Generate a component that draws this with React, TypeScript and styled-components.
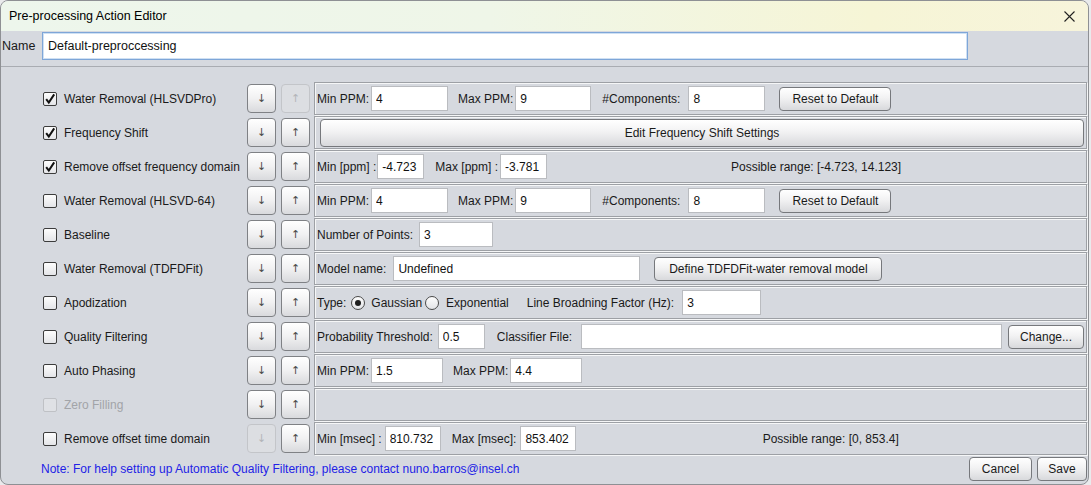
import React from "react";
import styled, { createGlobalStyle } from "styled-components";

const GlobalStyle = createGlobalStyle`
  html, body {
    margin: 0;
    padding: 0;
    background: #e9eaec;
  }
  * {
    box-sizing: border-box;
  }
`;

const Window = styled.div`
  width: 1089px;
  height: 485px;
  border: 1px solid #8e9094;
  border-radius: 8px;
  overflow: hidden;
  display: flex;
  flex-direction: column;
  background: #d6d9df;
  font-family: "Liberation Sans", Arial, sans-serif;
  font-size: 12px;
  color: #1a1a1a;
`;

const TitleBar = styled.div`
  height: 30px;
  flex: none;
  display: flex;
  align-items: center;
  padding: 0 10px 0 8px;
  background: linear-gradient(90deg, #edf6ec 0%, #eff6e8 45%, #f6f5d6 80%, #f7f4db 100%);
`;

const Title = styled.span`
  flex: 1;
  font-size: 12.5px;
  color: #000;
`;

const CloseButton = styled.button`
  width: 14px;
  height: 14px;
  padding: 0;
  border: none;
  background: none;
  display: flex;
  align-items: center;
  justify-content: center;
  margin-right: 2px;
`;

const NameRow = styled.div`
  display: flex;
  align-items: center;
  padding: 1px 0 0 1px;
`;

const NameLabel = styled.span`
  font-size: 12.5px;
  width: 40px;
`;

const NameInput = styled.input`
  width: 926px;
  height: 28px;
  border: 1px solid #7ea6d8;
  box-shadow: inset 0 0 0 1px #cfe0f3;
  padding: 0 5px;
  font-family: inherit;
  font-size: 12.5px;
  color: #111;
  outline: none;
`;

const Divider = styled.div`
  height: 1px;
  margin-top: 6px;
  background: #a9acb2;
`;

const ActionList = styled.div`
  display: flex;
  flex-direction: column;
  gap: 1px;
  margin-top: 15px;
  padding: 0 1px 0 42px;
`;

const Row = styled.div`
  display: flex;
  align-items: center;
  height: 33px;
`;

const Toggle = styled.label<{ $disabled?: boolean }>`
  width: 203px;
  display: flex;
  align-items: center;
  gap: 7px;
  color: ${(p) => (p.$disabled ? "#a2a4a8" : "#1a1a1a")};
  white-space: nowrap;
`;

const Box = styled.span<{ $disabled?: boolean }>`
  width: 14px;
  height: 14px;
  flex: none;
  border: 1px solid ${(p) => (p.$disabled ? "#bfc1c5" : "#3c3c3c")};
  border-radius: 2px;
  background: ${(p) => (p.$disabled ? "#dfe1e5" : "linear-gradient(#fdfdfd, #e4e5e8)")};
  display: flex;
  align-items: center;
  justify-content: center;
`;

const MoveButton = styled.button<{ $ml: number; $disabled?: boolean }>`
  width: 29px;
  height: 29px;
  margin-left: ${(p) => p.$ml}px;
  padding: 0;
  border: 1px solid ${(p) => (p.$disabled ? "#c3c5c9" : "#7f8185")};
  border-radius: 4px;
  background: ${(p) => (p.$disabled ? "#dcdee2" : "linear-gradient(#ffffff, #f1f1f2 50%, #d9dadd)")};
  font-family: "DejaVu Sans", "Liberation Sans", sans-serif;
  font-size: 11px;
  color: ${(p) => (p.$disabled ? "#b3b5b9" : "#4a4a4a")};
`;

const Panel = styled.div`
  flex: 1;
  height: 33px;
  margin-left: 4px;
  display: flex;
  align-items: center;
  padding: 0 1px 0 2px;
  border: 1px solid #9da0a5;
  box-shadow: inset 1px 1px 0 #f5f6f7, 1px 1px 0 #f5f6f7;
`;

const Text = styled.span<{ $ml?: number }>`
  margin-left: ${(p) => p.$ml ?? 0}px;
  white-space: nowrap;
`;

const RangeText = styled.span`
  flex: 1;
  text-align: center;
  white-space: nowrap;
`;

const Field = styled.input<{ $w?: number; $ml?: number }>`
  width: ${(p) => (p.$w ? `${p.$w}px` : "auto")};
  flex: ${(p) => (p.$w ? "none" : "1")};
  min-width: 0;
  height: 25px;
  margin-left: ${(p) => p.$ml ?? 0}px;
  border: 1px solid #babcc0;
  background: #fff;
  padding: 0 4px;
  font-family: inherit;
  font-size: 12px;
  color: #111;
  outline: none;
`;

const PushButton = styled.button<{ $w?: number; $ml?: number; $h?: number; $mr?: number }>`
  width: ${(p) => (p.$w ? `${p.$w}px` : "auto")};
  flex: ${(p) => (p.$w ? "none" : "1")};
  height: ${(p) => p.$h ?? 24}px;
  margin-left: ${(p) => p.$ml ?? 0}px;
  margin-right: ${(p) => p.$mr ?? 0}px;
  padding: 0;
  border: 1px solid #76787c;
  border-radius: 4px;
  background: linear-gradient(#ffffff, #f2f2f3 45%, #d8d9dc);
  font-family: "Liberation Sans", Arial, sans-serif;
  font-size: 12px;
  color: #1a1a1a;
`;

const Radio = styled.span<{ $ml: number; $on?: boolean }>`
  width: 14px;
  height: 14px;
  flex: none;
  margin-left: ${(p) => p.$ml}px;
  border: 1px solid #4a4a4a;
  border-radius: 50%;
  background: linear-gradient(#fdfdfd, #e3e4e7);
  display: flex;
  align-items: center;
  justify-content: center;
  &::after {
    content: "";
    width: 6px;
    height: 6px;
    border-radius: 50%;
    background: ${(p) => (p.$on ? "#1e1e1e" : "transparent")};
  }
`;

const Footer = styled.div`
  flex: 1;
  display: flex;
  align-items: center;
  padding: 0 1px 1px 40px;
  gap: 5px;
`;

const Note = styled.span`
  flex: 1;
  color: #2222e6;
`;

const Check = ({ on, disabled }: { on?: boolean; disabled?: boolean }) => (
  <Box $disabled={disabled}>
    {on && (
      <svg width="12" height="12" viewBox="0 0 12 12">
        <path d="M2.2 6.2 L4.8 9.6 L10.2 1.4" fill="none" stroke="#111" strokeWidth="2" />
      </svg>
    )}
  </Box>
);

type Action = {
  label: string;
  on?: boolean;
  disabled?: boolean;
  downOff?: boolean;
  upOff?: boolean;
  panel: React.ReactNode;
};

const hlsvdPanel = (
  <>
    <Text>Min PPM:</Text>
    <Field $w={77} $ml={2} defaultValue="4" />
    <Text $ml={10}>Max PPM:</Text>
    <Field $w={76} $ml={2} defaultValue="9" />
    <Text $ml={11}>#Components:</Text>
    <Field $w={77} $ml={8} defaultValue="8" />
    <PushButton $w={112} $ml={14}>Reset to Default</PushButton>
  </>
);

const actions: Action[] = [
  { label: "Water Removal (HLSVDPro)", on: true, upOff: true, panel: hlsvdPanel },
  {
    label: "Frequency Shift",
    on: true,
    panel: (
      <PushButton $h={28} $ml={3} $mr={1}>
        Edit Frequency Shift Settings
      </PushButton>
    ),
  },
  {
    label: "Remove offset frequency domain",
    on: true,
    panel: (
      <>
        <Text>Min [ppm] :</Text>
        <Field $w={47} $ml={1} defaultValue="-4.723" />
        <Text $ml={11}>Max [ppm] :</Text>
        <Field $w={47} $ml={2} defaultValue="-3.781" />
        <RangeText>Possible range: [-4.723, 14.123]</RangeText>
      </>
    ),
  },
  { label: "Water Removal (HLSVD-64)", panel: hlsvdPanel },
  {
    label: "Baseline",
    panel: (
      <>
        <Text>Number of Points:</Text>
        <Field $w={74} $ml={6} defaultValue="3" />
      </>
    ),
  },
  {
    label: "Water Removal (TDFDFit)",
    panel: (
      <>
        <Text>Model name:</Text>
        <Field $w={247} $ml={7} defaultValue="Undefined" />
        <PushButton $w={228} $ml={14}>Define TDFDFit-water removal model</PushButton>
      </>
    ),
  },
  {
    label: "Apodization",
    panel: (
      <>
        <Text>Type:</Text>
        <Radio $ml={5} $on />
        <Text $ml={6}>Gaussian</Text>
        <Radio $ml={3} />
        <Text $ml={7}>Exponential</Text>
        <Text $ml={18}>Line Broadning Factor (Hz):</Text>
        <Field $w={79} $ml={8} defaultValue="3" />
      </>
    ),
  },
  {
    label: "Quality Filtering",
    panel: (
      <>
        <Text>Probability Threshold:</Text>
        <Field $w={47} $ml={5} defaultValue="0.5" />
        <Text $ml={12}>Classifier File:</Text>
        <Field $ml={9} defaultValue="" />
        <PushButton $w={76} $ml={6} $mr={1}>Change...</PushButton>
      </>
    ),
  },
  {
    label: "Auto Phasing",
    panel: (
      <>
        <Text>Min PPM:</Text>
        <Field $w={72} $ml={2} defaultValue="1.5" />
        <Text $ml={10}>Max PPM:</Text>
        <Field $w={72} $ml={2} defaultValue="4.4" />
      </>
    ),
  },
  { label: "Zero Filling", disabled: true, panel: null },
  {
    label: "Remove offset time domain",
    downOff: true,
    panel: (
      <>
        <Text>Min [msec] :</Text>
        <Field $w={56} $ml={3} defaultValue="810.732" />
        <Text $ml={11}>Max [msec]:</Text>
        <Field $w={56} $ml={4} defaultValue="853.402" />
        <RangeText>Possible range: [0, 853.4]</RangeText>
      </>
    ),
  },
];

export default function App() {
  return (
    <>
      <GlobalStyle />
      <Window>
        <TitleBar>
          <Title>Pre-processing Action Editor</Title>
          <CloseButton aria-label="Close">
            <svg width="11" height="11" viewBox="0 0 11 11">
              <path d="M0.5 0.5 L10.5 10.5 M10.5 0.5 L0.5 10.5" stroke="#222" strokeWidth="1.1" />
            </svg>
          </CloseButton>
        </TitleBar>
        <NameRow>
          <NameLabel>Name</NameLabel>
          <NameInput defaultValue="Default-preproccessing" />
        </NameRow>
        <Divider />
        <ActionList>
          {actions.map((a) => (
            <Row key={a.label}>
              <Toggle $disabled={a.disabled}>
                <Check on={a.on} disabled={a.disabled} />
                {a.label}
              </Toggle>
              <MoveButton $ml={1} $disabled={a.downOff}>↓</MoveButton>
              <MoveButton $ml={5} $disabled={a.upOff}>↑</MoveButton>
              <Panel>{a.panel}</Panel>
            </Row>
          ))}
        </ActionList>
        <Footer>
          <Note>Note: For help setting up Automatic Quality Filtering, please contact nuno.barros@insel.ch</Note>
          <PushButton $w={63}>Cancel</PushButton>
          <PushButton $w={50}>Save</PushButton>
        </Footer>
      </Window>
    </>
  );
}
